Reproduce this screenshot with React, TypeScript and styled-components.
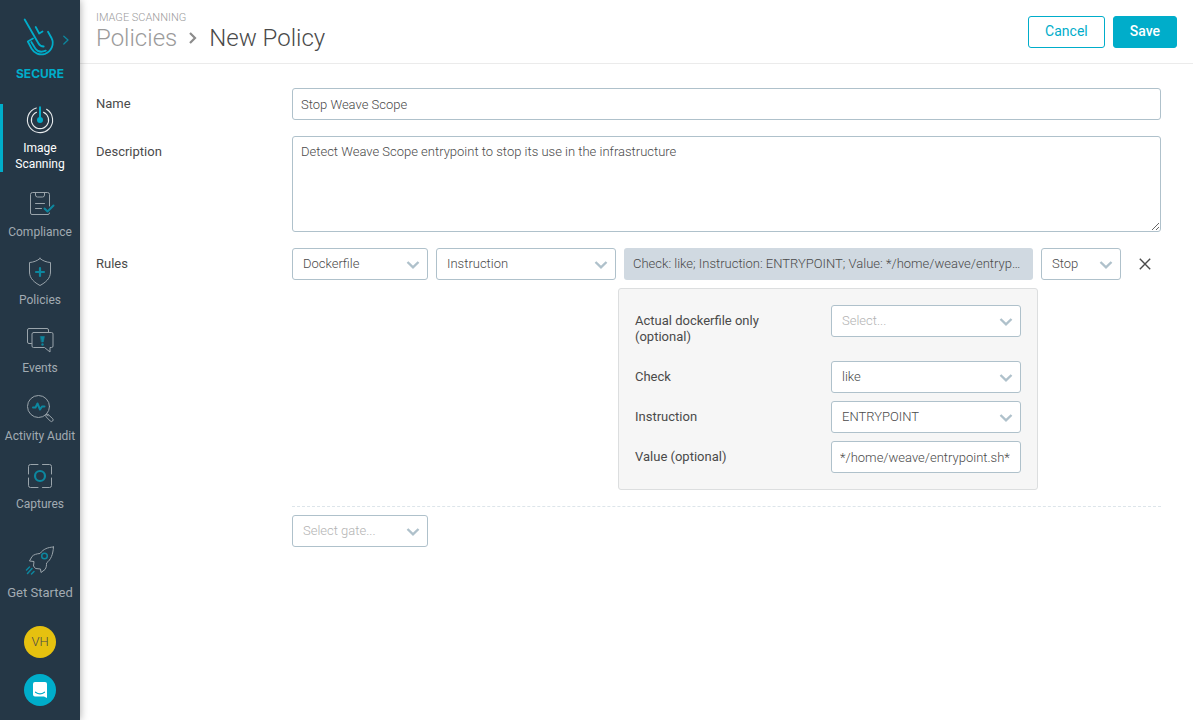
import React, { useState } from 'react';
import styled, { createGlobalStyle, css } from 'styled-components';

const GlobalStyle = createGlobalStyle`
  *, *::before, *::after { box-sizing: border-box; }
  body { margin: 0; background: #fff; }
  body, button, input, textarea, select {
    font-family: Roboto, "Liberation Sans", sans-serif;
    font-size: 13px;
    line-height: 16px;
  }
`;

const color = {
  navy: '#253746',
  teal: '#00adca',
  tealDim: '#0d879f',
  iconLine: '#9aa4ab',
  navText: '#a2abb2',
  border: '#afc1cb',
  text: '#4a4a4a',
  muted: '#9b9b9b',
};

const Shell = styled.div`
  display: flex;
  min-height: 100vh;
`;

const Sidebar = styled.nav`
  display: flex;
  flex-direction: column;
  flex: 0 0 80px;
  padding: 16px 0 14px;
  background: ${color.navy};
  box-shadow: 0 0 8px rgba(0, 0, 0, 0.35);
  z-index: 1;
`;

const Brand = styled.a`
  display: flex;
  flex-direction: column;
  align-items: center;
  margin-bottom: 22px;
  color: ${color.teal};
  font-family: Inter, sans-serif;
  font-size: 12px;
  font-weight: 700;
  text-decoration: none;
  svg { display: block; margin-bottom: 6px; }
`;

const NavList = styled.ul`
  display: flex;
  flex-direction: column;
  gap: 16px;
  margin: 0;
  padding: 0;
  list-style: none;
`;

const NavLink = styled.a<{ $active?: boolean; $large?: boolean }>`
  display: flex;
  flex-direction: column;
  align-items: center;
  gap: 4px;
  color: ${p => (p.$active ? '#fff' : color.navText)};
  font-size: ${p => (p.$large ? 13 : 12)}px;
  text-align: center;
  text-decoration: none;
  ${p => p.$active && css`box-shadow: inset 3px 0 ${color.teal};`}
  svg { display: block; }
  span { max-width: 72px; }
`;

const SidebarFooter = styled.div`
  display: flex;
  flex-direction: column;
  align-items: center;
  gap: 16px;
  margin-top: auto;
  padding-top: 16px;
  a { margin-bottom: 9px; }
`;

const RoundButton = styled.button<{ $bg: string }>`
  display: flex;
  align-items: center;
  justify-content: center;
  width: 32px;
  height: 32px;
  padding: 0;
  border: 0;
  border-radius: 50%;
  background: ${p => p.$bg};
  color: #4a4a4a;
  font-weight: 300;
  cursor: pointer;
`;

const Main = styled.main`
  flex: 1;
  min-width: 0;
`;

const Header = styled.header`
  display: flex;
  align-items: flex-start;
  justify-content: space-between;
  height: 64px;
  padding: 0 16px;
  border-bottom: 1px solid #ebebeb;
`;

const Section = styled.div`
  margin-top: 12px;
  color: ${color.muted};
  font-size: 11px;
  font-weight: 300;
  line-height: 12px;
`;

const Crumbs = styled.h1`
  display: flex;
  align-items: center;
  margin: 0;
  color: ${color.text};
  font-size: 24px;
  font-weight: 300;
  line-height: 28px;
  a { color: ${color.muted}; text-decoration: none; }
  svg { margin: 0 12px; }
`;

const Actions = styled.div`
  display: flex;
  gap: 8px;
  padding-top: 16px;
`;

const Button = styled.button<{ $primary?: boolean }>`
  height: 32px;
  padding: 0 16px 2px;
  border: 1px solid ${color.teal};
  border-radius: 3px;
  background: ${p => (p.$primary ? color.teal : '#fff')};
  color: ${p => (p.$primary ? '#fff' : color.teal)};
  font-size: 14px;
  font-weight: ${p => (p.$primary ? 500 : 400)};
  cursor: pointer;
`;

const Form = styled.form`
  display: flex;
  flex-direction: column;
  gap: 16px;
  padding: 24px 32px 24px 16px;
`;

const Field = styled.div`
  display: grid;
  grid-template-columns: 196px minmax(0, 1fr);
  align-items: start;
`;

const Label = styled.label`
  max-width: 140px;
  padding: 8px 0;
  color: ${color.text};
`;

const controlStyle = css`
  display: block;
  width: 100%;
  border: 1px solid ${color.border};
  border-radius: 3px;
  background: #fff;
  color: ${color.text};
  font-weight: 300;
  outline: none;
`;

const TextInput = styled.input`
  ${controlStyle}
  height: 32px;
  padding: 1px 8px 0;
`;

const TextArea = styled.textarea`
  ${controlStyle}
  height: 96px;
  padding: 7px 8px;
  resize: vertical;
`;

const SelectWrap = styled.div`
  position: relative;
  svg {
    position: absolute;
    top: 10px;
    right: 8px;
    pointer-events: none;
  }
`;

const SelectBox = styled.select<{ $empty: boolean }>`
  ${controlStyle}
  appearance: none;
  height: 32px;
  padding: 0 24px 0 10px;
  color: ${p => (p.$empty ? '#b3b3b3' : color.text)};
`;

const RuleGrid = styled.div`
  display: grid;
  grid-template-columns: 136px 180px minmax(0, 1fr) 80px 32px;
  gap: 8px;
  padding-bottom: 16px;
  border-bottom: 1px dashed #dde5ea;
`;

const Summary = styled.button`
  height: 32px;
  padding: 0 9px;
  border: 0;
  border-radius: 3px;
  background: #d0d9e1;
  color: ${color.text};
  font-weight: 300;
  text-align: left;
  overflow: hidden;
  text-overflow: ellipsis;
  white-space: nowrap;
`;

const IconButton = styled.button`
  display: flex;
  align-items: center;
  justify-content: center;
  height: 32px;
  padding: 0;
  border: 0;
  background: none;
  cursor: pointer;
`;

const Params = styled.div`
  grid-column: 3;
  display: flex;
  flex-direction: column;
  gap: 8px;
  margin: 0 -5px 0 -6px;
  padding: 16px;
  border: 1px solid #dcdedf;
  border-radius: 3px;
  background: #f6f6f6;
`;

const NewRule = styled.div`
  width: 136px;
  margin-top: 8px;
`;

interface SelectProps {
  id?: string;
  label?: string;
  initial?: string;
  placeholder?: string;
  options: string[];
}

function Select({ id, label, initial = '', placeholder, options }: SelectProps) {
  const [value, setValue] = useState(initial);
  return (
    <SelectWrap>
      <SelectBox id={id} aria-label={label} $empty={!value} value={value} onChange={e => setValue(e.target.value)}>
        {placeholder && <option value="">{placeholder}</option>}
        {options.map(o => <option key={o}>{o}</option>)}
      </SelectBox>
      <svg width="14" height="12" viewBox="0 0 14 12" fill="none" stroke={color.border} strokeWidth="2.4">
        <path d="M1.500 4 7 9.300 12.500 4" />
      </svg>
    </SelectWrap>
  );
}

function Icon({ children, size = 32 }: { children: React.ReactNode; size?: number }) {
  return (
    <svg width="32" height={size} viewBox={`0 0 32 ${size}`} fill="none" stroke={color.iconLine} strokeLinecap="round" strokeLinejoin="round">
      {children}
    </svg>
  );
}

const navItems = [
  {
    label: 'Image Scanning',
    active: true,
    icon: (
      <g stroke="#e8ebed" strokeWidth="1.100">
        <path d="M12.300 4A12.600 12.600 0 1 0 22.600 5.300" />
        <path d="M12.500 8.200A8.600 8.600 0 1 0 19.500 8.200" />
        <path d="M16 3.200V16" stroke={color.teal} strokeWidth="2" />
        <circle cx="16" cy="16" r="3" fill={color.teal} stroke="none" />
      </g>
    ),
  },
  {
    label: 'Compliance',
    icon: (
      <>
        <path d="M25.500 18V6.500a2 2 0 0 0-2-2H8.500a2 2 0 0 0-2 2V25a1.500 1.500 0 0 0 1.500 1.500H24a1.500 1.500 0 0 0 1.500-1.500M11.500 4.500V7a2 2 0 0 0 2 2h5a2 2 0 0 0 2-2V4.500M11.500 15.500h9M11.500 20.500h6" />
        <path d="m20.500 20.500 3 3 6-6" stroke={color.tealDim} strokeWidth="2" />
      </>
    ),
  },
  {
    label: 'Policies',
    icon: (
      <>
        <path d="M16 2.500C13 5 9.500 6.200 5.500 6.500V16c0 6.500 5 10.500 10.500 13.500C21.500 26.500 26.500 22.500 26.500 16V6.500C22.500 6.200 19 5 16 2.500Z" />
        <path d="M16 12v8M12 16h8" stroke={color.tealDim} strokeWidth="2.200" />
      </>
    ),
  },
  {
    label: 'Events',
    icon: (
      <>
        <path d="M24.500 8.500V6a1.500 1.500 0 0 0-1.500-1.500H5A1.500 1.500 0 0 0 3.500 6v12A1.500 1.500 0 0 0 5 19.500h2.500" />
        <path d="M9.500 8.500h18A1.500 1.500 0 0 1 29 10v12a1.500 1.500 0 0 1-1.500 1.500H26V28l-5.500-4.500h-11A1.500 1.500 0 0 1 8 22V10a1.500 1.500 0 0 1 1.500-1.500Z" />
        <path d="M16.600 12.500h3.800L19.300 18h-1.600Z" fill={color.tealDim} stroke={color.tealDim} strokeWidth=".6" />
        <circle cx="18.500" cy="20.500" r="1.200" fill={color.tealDim} stroke="none" />
      </>
    ),
  },
  {
    label: 'Activity Audit',
    icon: (
      <>
        <circle cx="14.500" cy="14.500" r="11" />
        <path d="m22.400 22.200 1.600 1.600M24.500 22.800l4.200 3.900a1.700 1.700 0 0 1-2.400 2.400l-4.100-4.200a1.500 1.500 0 0 1 2.300-2.100Z" />
        <path d="M9 15.500h2.500l2-4 2.500 6 2-3h2.500" stroke={color.tealDim} strokeWidth="2" />
      </>
    ),
  },
  {
    label: 'Captures',
    icon: (
      <>
        <path d="M14 4.500H6.500a2 2 0 0 0-2 2V14M18.500 4.500h7a2 2 0 0 1 2 2V14M14 27.500H6.500a2 2 0 0 1-2-2V18M18.500 27.500h7a2 2 0 0 0 2-2V18" />
        <circle cx="16" cy="16" r="5" stroke={color.tealDim} strokeWidth="2.200" />
      </>
    ),
  },
];

export default function App() {
  return (
    <>
      <GlobalStyle />
      <Shell>
        <Sidebar>
          <Brand href="#">
            <svg width="80" height="44" viewBox="0 0 80 44" fill="none" stroke={color.teal} strokeWidth="1.800" strokeLinecap="round" strokeLinejoin="round">
              <path d="M24.700 3.500 38.500 27.500c1.200 2.200 3 3 5.200 3" />
              <path d="m35.700 11 3.500 6.500 3.300-2" />
              <path d="M48 15.700 51.500 22c3.200 6-.2 13.500-6.500 15.800-5.500 1.800-10.800-.5-13.500-5.300L27.800 25.500 33 22.500" />
              <path d="m31.300 26 4 6.500c2.200 3.300 6 4 10.500 2.200" />
              <path d="m63.800 20.200 4.200 3.900-4.200 3.900" stroke={color.tealDim} strokeWidth="1.300" />
            </svg>
            SECURE
          </Brand>
          <NavList>
            {navItems.map(item => (
              <li key={item.label}>
                <NavLink href="#" $active={item.active}>
                  <Icon>{item.icon}</Icon>
                  <span>{item.label}</span>
                </NavLink>
              </li>
            ))}
          </NavList>
          <SidebarFooter>
            <NavLink href="#" $large>
              <Icon size={40}>
                <path d="M29.500 6c-6 .3-10 2-13.500 6.500-3 .2-6.300 1-8 3l-2.500 4.500 4.500.5-.5 4.500 2 2.500 5 .5.500 3.500 4-3c1.500-2 1.500-4.500 1.500-6.500C27 18.500 29 13.500 29.500 6Z" />
                <circle cx="20.500" cy="15" r="2.800" stroke={color.tealDim} strokeWidth="1.500" />
                <path d="m5.500 26-3 3M8 27.500l-4.500 5M10 30.500l-2.500 2.500" stroke={color.tealDim} strokeWidth="1.500" />
              </Icon>
              <span>Get Started</span>
            </NavLink>
            <RoundButton $bg="#e6c10f" type="button">VH</RoundButton>
            <RoundButton $bg={color.teal} type="button" aria-label="Messages">
              <svg width="16" height="16" viewBox="0 0 16 16">
                <path d="M3 0h10a2 2 0 0 1 2 2v14l-3-1.500H3a2 2 0 0 1-2-2V2a2 2 0 0 1 2-2Z" fill="#fff" />
                <path d="M3.500 10.200c3 2.200 6 2.200 9 0" fill="none" stroke={color.teal} strokeWidth="1.200" strokeLinecap="round" />
              </svg>
            </RoundButton>
          </SidebarFooter>
        </Sidebar>
        <Main>
          <Header>
            <div>
              <Section>IMAGE SCANNING</Section>
              <Crumbs>
                <a href="#">Policies</a>
                <svg width="8" height="12" viewBox="0 0 8 12" fill="none" stroke="#8c8c8c" strokeWidth="2.200">
                  <path d="m1 1 5 5-5 5" />
                </svg>
                New Policy
              </Crumbs>
            </div>
            <Actions>
              <Button type="button">Cancel</Button>
              <Button type="submit" form="policy" $primary>Save</Button>
            </Actions>
          </Header>
          <Form id="policy" onSubmit={e => e.preventDefault()}>
            <Field>
              <Label htmlFor="name">Name</Label>
              <TextInput id="name" defaultValue="Stop Weave Scope" />
            </Field>
            <Field>
              <Label htmlFor="description">Description</Label>
              <TextArea id="description" defaultValue="Detect Weave Scope entrypoint to stop its use in the infrastructure" />
            </Field>
            <Field>
              <Label htmlFor="gate">Rules</Label>
              <div>
                <RuleGrid>
                  <Select id="gate" initial="Dockerfile" options={['Dockerfile', 'Packages', 'Vulnerabilities']} />
                  <Select label="Trigger" initial="Instruction" options={['Instruction', 'Exposed ports']} />
                  <Summary type="button">Check: like; Instruction: ENTRYPOINT; Value: */home/weave/entrypoint.sh*</Summary>
                  <Select label="Action" initial="Stop" options={['Stop', 'Warn']} />
                  <IconButton type="button" aria-label="Remove rule">
                    <svg width="12" height="12" viewBox="0 0 12 12" stroke={color.text} strokeWidth="1.400">
                      <path d="m.8.8 10.400 10.400M11.200.8.8 11.200" />
                    </svg>
                  </IconButton>
                  <Params>
                    <Field>
                      <Label htmlFor="actual">Actual dockerfile only (optional)</Label>
                      <Select id="actual" placeholder="Select..." options={['true', 'false']} />
                    </Field>
                    <Field>
                      <Label htmlFor="check">Check</Label>
                      <Select id="check" initial="like" options={['like', '=', '!=']} />
                    </Field>
                    <Field>
                      <Label htmlFor="instruction">Instruction</Label>
                      <Select id="instruction" initial="ENTRYPOINT" options={['ENTRYPOINT', 'CMD', 'RUN']} />
                    </Field>
                    <Field>
                      <Label htmlFor="value">Value (optional)</Label>
                      <TextInput id="value" defaultValue="*/home/weave/entrypoint.sh*" />
                    </Field>
                  </Params>
                </RuleGrid>
                <NewRule>
                  <Select label="New rule gate" placeholder="Select gate..." options={['Dockerfile', 'Packages']} />
                </NewRule>
              </div>
            </Field>
          </Form>
        </Main>
      </Shell>
    </>
  );
}
